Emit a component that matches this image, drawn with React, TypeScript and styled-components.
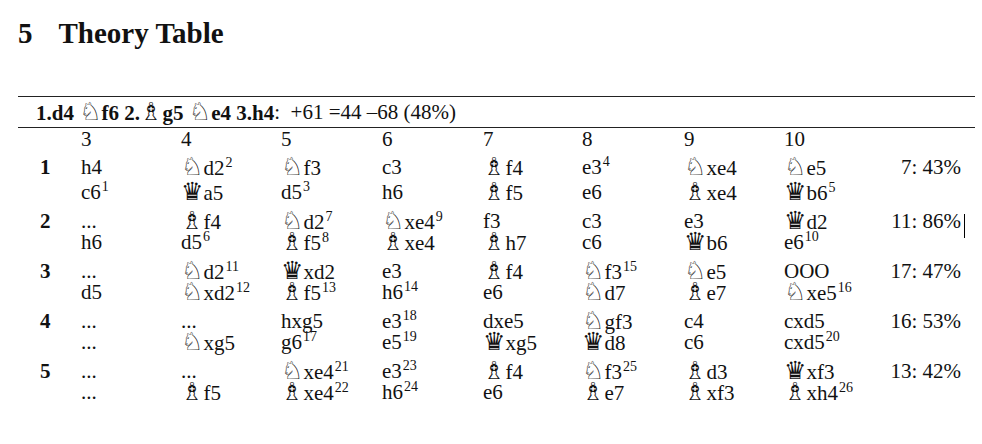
import React from "react";
import styled, { createGlobalStyle } from "styled-components";

const Global = createGlobalStyle`
  body { margin: 0; background: #fff; color: #111; font-family: "Liberation Serif", "Times New Roman", serif; }
`;

const Page = styled.div`
  width: 982px;
  height: 444px;
  overflow: hidden;
  padding: 16px 7px 0 18px;
  box-sizing: border-box;
`;
const Title = styled.h1`
  margin: 0 0 46px 0;
  font-size: 29px;
  line-height: 34px;
  font-weight: bold;
  display: flex;
  gap: 26px;
`;
const Header = styled.div`
  border-top: 1px solid #222;
  border-bottom: 1px solid #222;
  height: 30px;
  padding-left: 18px;
  font-size: 21px;
  display: flex;
  align-items: center;
  white-space: pre;
`;
const Grid = styled.div`
  display: grid;
  grid-template-columns: 63px 100px 100px 101px 101px 99px 102px 100px 100px 77px;
  grid-auto-rows: 25px;
  font-size: 21px;
  padding-top: 2px;
`;
const Cell = styled.div<{ $gapTop?: boolean }>`
  display: flex;
  align-items: center;
  white-space: nowrap;
  margin-top: ${p => (p.$gapTop ? "8px" : "0")};
`;
const HeadCell = styled(Cell)`
  margin-bottom: 7px;
`;
const Num = styled(Cell)`
  font-weight: bold;
  padding-left: 22px;
`;
const Pct = styled(Cell)`
  justify-content: flex-end;
  position: relative;
`;
const Cursor = styled.span`
  position: absolute;
  right: -4px;
  top: 1px;
  width: 1px;
  height: 24px;
  background: #000;
`;
const Fig = styled.span`
  font-family: "DejaVu Sans", sans-serif;
  font-size: 25px;
  font-weight: normal;
  line-height: 1;
`;
const Sup = styled.sup`
  font-size: 14px;
  line-height: 0;
  margin-left: 1px;
`;

const glyph: Record<string, string> = { N: "♘", B: "♗", Q: "♛" };

const Move = ({ m }: { m: string }) => {
  const [text, sup] = m.split("^");
  const first = text[0];
  return (
    <span>
      {glyph[first] ? <><Fig>{glyph[first]}</Fig>{text.slice(1)}</> : text}
      {sup && <Sup>{sup}</Sup>}
    </span>
  );
};

const rows: { n: number; w: string[]; b: string[]; pct: string }[] = [
  { n: 1, w: ["h4", "Nd2^2", "Nf3", "c3", "Bf4", "e3^4", "Nxe4", "Ne5"], b: ["c6^1", "Qa5", "d5^3", "h6", "Bf5", "e6", "Bxe4", "Qb6^5"], pct: "7: 43%" },
  { n: 2, w: ["...", "Bf4", "Nd2^7", "Nxe4^9", "f3", "c3", "e3", "Qd2"], b: ["h6", "d5^6", "Bf5^8", "Bxe4", "Bh7", "c6", "Qb6", "e6^10"], pct: "11: 86%" },
  { n: 3, w: ["...", "Nd2^11", "Qxd2", "e3", "Bf4", "Nf3^15", "Ne5", "OOO"], b: ["d5", "Nxd2^12", "Bf5^13", "h6^14", "e6", "Nd7", "Be7", "Nxe5^16"], pct: "17: 47%" },
  { n: 4, w: ["...", "...", "hxg5", "e3^18", "dxe5", "Ngf3", "c4", "cxd5"], b: ["...", "Nxg5", "g6^17", "e5^19", "Qxg5", "Qd8", "c6", "cxd5^20"], pct: "16: 53%" },
  { n: 5, w: ["...", "...", "Nxe4^21", "e3^23", "Bf4", "Nf3^25", "Bd3", "Qxf3"], b: ["...", "Bf5", "Bxe4^22", "h6^24", "e6", "Be7", "Bxf3", "Bxh4^26"], pct: "13: 42%" },
];

export default function App() {
  return (
    <Page>
      <Global />
      <Title><span>5</span><span>Theory Table</span></Title>
      <Header>
        <b>1.d4 <Fig>♘</Fig>f6 2.<Fig>♗</Fig>g5 <Fig>♘</Fig>e4 3.h4</b>:  +61 =44 –68 (48%)
      </Header>
      <Grid>
        <HeadCell />
        {[3, 4, 5, 6, 7, 8, 9, 10].map(c => <HeadCell key={c}>{c}</HeadCell>)}
        <HeadCell />
        {rows.map(r => (
          <React.Fragment key={r.n}>
            <Num $gapTop={r.n > 1}>{r.n}</Num>
            {r.w.map((m, i) => <Cell key={"w" + i} $gapTop={r.n > 1}><Move m={m} /></Cell>)}
            <Pct $gapTop={r.n > 1}>{r.pct}{r.n === 2 && <Cursor />}</Pct>
            <Cell />
            {r.b.map((m, i) => <Cell key={"b" + i}><Move m={m} /></Cell>)}
            <Cell />
          </React.Fragment>
        ))}
      </Grid>
    </Page>
  );
}
